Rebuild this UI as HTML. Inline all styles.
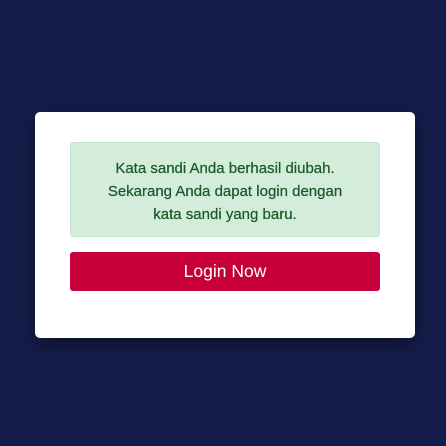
<!DOCTYPE html>
<html><head><style>
html,body{margin:0;padding:0;width:446px;height:446px;background:#151d4a;overflow:hidden}
.card{position:absolute;left:35px;top:112px;width:380px;height:226px;background:#fff;border-radius:5px;box-shadow:0 6px 20px rgba(0,0,0,.45)}
.alert{position:absolute;left:35px;top:30px;width:310px;height:95px;background:#d4eddb;border:1px solid #c3e6cb;border-radius:3px;color:#1a5a28;font-family:"Liberation Sans",sans-serif;font-size:15px;line-height:23px;text-align:center;box-sizing:border-box;padding-top:14px;-webkit-text-stroke:0.25px #1a5a28}
.btn{position:absolute;left:35px;top:140px;width:310px;height:39px;background:#c8003a;border-radius:3px;color:#fff;font-family:"Liberation Sans",sans-serif;font-size:17.5px;line-height:39px;text-align:center}
</style></head><body>
<div class="card">
<div class="alert">Kata sandi Anda berhasil diubah.<br>Sekarang Anda dapat login dengan<br>kata sandi yang baru.</div>
<div class="btn">Login Now</div>
</div>
</body></html>
